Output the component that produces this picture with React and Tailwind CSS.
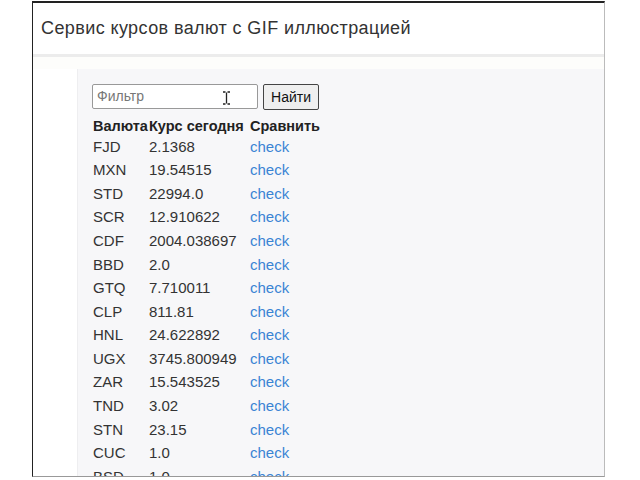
import React from 'react';

const rates = [
  ['FJD', '2.1368'],
  ['MXN', '19.54515'],
  ['STD', '22994.0'],
  ['SCR', '12.910622'],
  ['CDF', '2004.038697'],
  ['BBD', '2.0'],
  ['GTQ', '7.710011'],
  ['CLP', '811.81'],
  ['HNL', '24.622892'],
  ['UGX', '3745.800949'],
  ['ZAR', '15.543525'],
  ['TND', '3.02'],
  ['STN', '23.15'],
  ['CUC', '1.0'],
  ['BSD', '1.0'],
];

const App = () => {
  return (
    <div className="w-[640px] h-[480px] bg-white font-['Liberation_Sans',Arial,sans-serif] text-[#333]">
      <div className="ml-[32px] pt-[1px]">
        <div className="w-[573px] h-[476px] border-l border-l-[#222] border-t-2 border-t-[#222] border-r border-r-[#bbb] border-b border-b-[#999] overflow-hidden flex flex-col">
          <header className="h-[54px] shrink-0 flex items-center pl-[8px] text-[18px] tracking-[0.4px] text-[#333] border-b-[3px] border-b-[#ececec]">
            Сервис курсов валют с GIF иллюстрацией
          </header>
          <div className="h-[12px] shrink-0 bg-[#fdfdfb]" />
          <main className="flex-1 ml-[44px] bg-[#f7f7f9] border-l border-l-[#eeeef0] pl-[14px] pt-[15px]">
            <div className="flex items-start gap-[5px]">
              <div className="relative w-[166px] h-[25px] bg-white border border-[#999] rounded-[2px] flex items-center pl-[4px] text-[14px] text-[#777]">
                Фильтр
                <svg className="absolute left-[129px] top-[6px]" width="9" height="14" viewBox="0 0 9 14">
                  <path d="M1 1h2.5M5.5 1H8M4.5 1.5v11M1 13h2.5M5.5 13H8" stroke="#222" strokeWidth="1.3" fill="none" />
                </svg>
              </div>
              <button className="w-[56px] h-[26px] bg-[#efefef] border-[1.5px] border-[#444] rounded-[2px] text-[14px] text-[#111] leading-none">
                Найти
              </button>
            </div>
            <div className="mt-[8px] h-[17px] leading-[17px] flex pl-[1px] font-bold text-[14.5px] text-[#222] whitespace-nowrap">
              <span className="w-[56px]">Валюта</span>
              <span className="w-[101px]">Курс сегодня</span>
              <span>Сравнить</span>
            </div>
            {rates.map(([code, rate]) => (
              <div key={code} className="h-[23.6px] flex items-center pl-[1px] text-[15px] text-[#333]">
                <span className="w-[56px]">{code}</span>
                <span className="w-[101px]">{rate}</span>
                <a className="text-[#3a84d4]">check</a>
              </div>
            ))}
          </main>
        </div>
      </div>
    </div>
  );
};

export default App;
